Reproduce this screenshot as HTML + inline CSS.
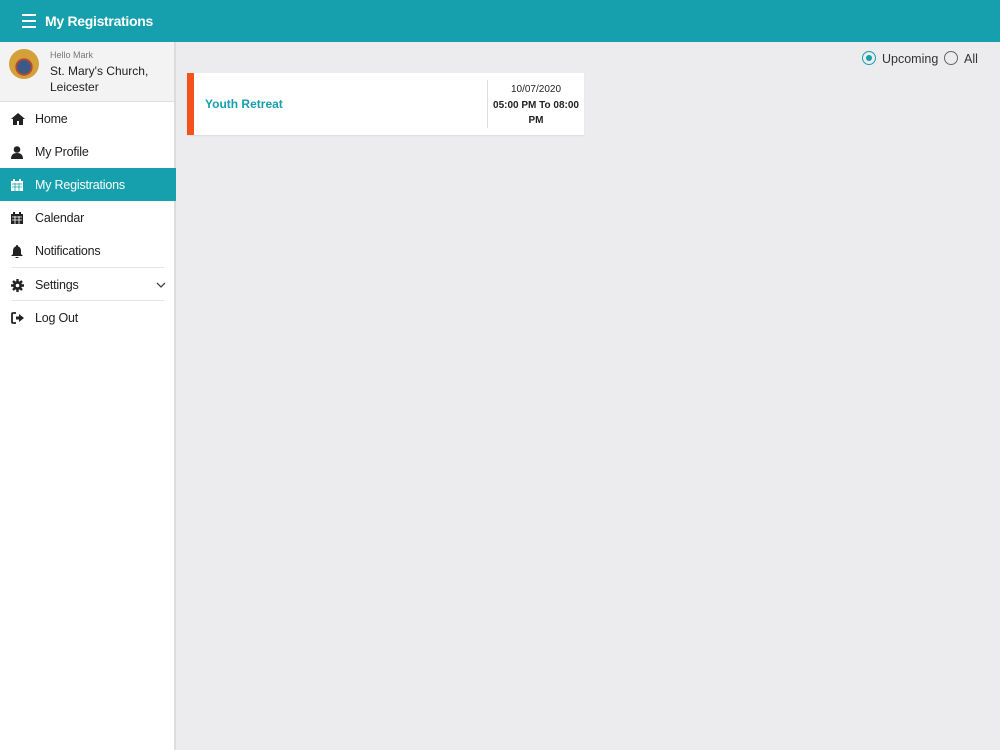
<!DOCTYPE html>
<html><head><meta charset="utf-8"><style>
*{margin:0;padding:0;box-sizing:border-box}
body{width:1000px;height:750px;overflow:hidden;font-family:"Liberation Sans",Arial,sans-serif;background:#ececee;position:relative}
.hdr{position:absolute;left:0;top:0;width:1000px;height:42px;background:#16a0ad;color:#fff}
.hdr .t{position:absolute;left:45px;top:13px;font-size:14px;font-weight:bold;letter-spacing:-0.3px}
.burger{position:absolute;left:22px;top:14px;width:14px}
.burger i{display:block;height:2px;background:#fff;margin-bottom:4px}
.side{position:absolute;left:0;top:42px;width:176px;height:708px;background:#fff;border-right:2px solid #dcdcde}
.prof{height:60px;background:#f3f3f3;border-bottom:1px solid #ddd;position:relative}
.av{position:absolute;left:9px;top:7px;width:30px;height:30px;border-radius:50%;background:radial-gradient(circle at 50% 60%,#3a5a8a 0 28%,#b8472f 30% 36%,#d3a03a 38% 100%)}
.hello{position:absolute;left:50px;top:8px;font-size:9px;color:#777}
.church{position:absolute;left:50px;top:21px;font-size:12px;color:#222;line-height:16px}
.item{position:absolute;left:0;width:176px;height:33px;font-size:12.5px;color:#222}
.item span{position:absolute;left:35px;top:10px;letter-spacing:-0.2px}
.item svg{position:absolute;left:11px;top:11px}
.act{background:#16a0ad;color:#fff}
.sep{position:absolute;left:12px;width:152px;height:1px;background:#e2e2e2}
.card{position:absolute;left:187px;top:73px;width:397px;height:62px;background:#fff;border-left:7px solid #f4511e;box-shadow:0 1px 1px #ddd}
.card .n{position:absolute;left:11px;top:24px;color:#16a0ad;font-weight:bold;font-size:12px}
.card .d{position:absolute;left:293px;top:7px;width:1px;height:48px;background:#ddd}
.card .r{position:absolute;left:294px;top:9px;width:96px;text-align:center;font-size:10px;color:#222;line-height:15.5px}
.radio{position:absolute;top:51px;width:14px;height:14px;border:1.5px solid #666;border-radius:50%}
.lbl{position:absolute;top:52px;font-size:12.5px;color:#333}
</style></head><body>
<div class="hdr"><div class="burger"><i></i><i></i><i></i></div><div class="t">My Registrations</div></div>
<div class="side">
<div class="prof"><div class="av"></div><div class="hello">Hello Mark</div><div class="church">St. Mary's Church,<br>Leicester</div></div>
<div class="item" style="top:60px"><svg width="14" height="12" viewBox="0 0 14 12"><path d="M7 0L0 6h2v6h4V8h2v4h4V6h2z" fill="#222"/></svg><span>Home</span></div>
<div class="item" style="top:93px"><svg width="12" height="13" viewBox="0 0 12 13"><circle cx="6" cy="3.5" r="3.3" fill="#222"/><path d="M0 13c0-4 2-6 6-6s6 2 6 6z" fill="#222"/></svg><span>My Profile</span></div>
<div class="item act" style="top:126px"><svg width="12" height="12" viewBox="0 0 12 12"><rect x="0" y="2" width="12" height="10" fill="#fff"/><rect x="2" y="0" width="2" height="3" fill="#fff"/><rect x="8" y="0" width="2" height="3" fill="#fff"/><path d="M1 5h10M1 8h10M4 4v8M8 4v8" stroke="#16a0ad" stroke-width=".8"/></svg><span>My Registrations</span></div>
<div class="item" style="top:159px"><svg width="12" height="12" viewBox="0 0 12 12"><rect x="0" y="2" width="12" height="10" fill="#222"/><rect x="2" y="0" width="2" height="3" fill="#222"/><rect x="8" y="0" width="2" height="3" fill="#222"/><path d="M1 5h10M1 8h10M4 4v8M8 4v8" stroke="#fff" stroke-width=".8"/></svg><span>Calendar</span></div>
<div class="item" style="top:192px"><svg width="12" height="13" viewBox="0 0 12 13"><path d="M6 0a1 1 0 011 1.2C9 2 10 3.5 10 6v3l2 2H0l2-2V6c0-2.5 1-4 3-4.8A1 1 0 016 0zM4.5 12h3a1.5 1.5 0 01-3 0z" fill="#222"/></svg><span>Notifications</span></div>
<div class="sep" style="top:225px"></div>
<div class="item" style="top:226px"><svg width="13" height="13" viewBox="0 0 13 13"><circle cx="6.5" cy="6.5" r="4.5" fill="#222"/><path d="M6.5 0v13M0 6.5h13M2 2l9 9M11 2l-9 9" stroke="#222" stroke-width="2.4"/><circle cx="6.5" cy="6.5" r="1.8" fill="#fff"/></svg><span>Settings</span><svg style="left:156px;top:14px" width="10" height="6" viewBox="0 0 10 6"><path d="M1 1l4 4 4-4" stroke="#444" fill="none" stroke-width="1.3"/></svg></div>
<div class="sep" style="top:258px"></div>
<div class="item" style="top:259px"><svg width="13" height="12" viewBox="0 0 13 12"><path d="M5 1H2a1 1 0 00-1 1v8a1 1 0 001 1h3" stroke="#222" stroke-width="1.8" fill="none"/><path d="M5 4.5h3V2l5 4-5 4V7.5H5z" fill="#222"/></svg><span>Log Out</span></div>
</div>
<div class="radio" style="left:862px;border-color:#16a0ad"><div style="position:absolute;left:2.5px;top:2.5px;width:6px;height:6px;border-radius:50%;background:#16a0ad"></div></div>
<div class="lbl" style="left:882px">Upcoming</div>
<div class="radio" style="left:944px"></div>
<div class="lbl" style="left:964px">All</div>
<div class="card"><div class="n">Youth Retreat</div><div class="d"></div><div class="r">10/07/2020<br><b>05:00 PM To 08:00 PM</b></div></div>
</body></html>
